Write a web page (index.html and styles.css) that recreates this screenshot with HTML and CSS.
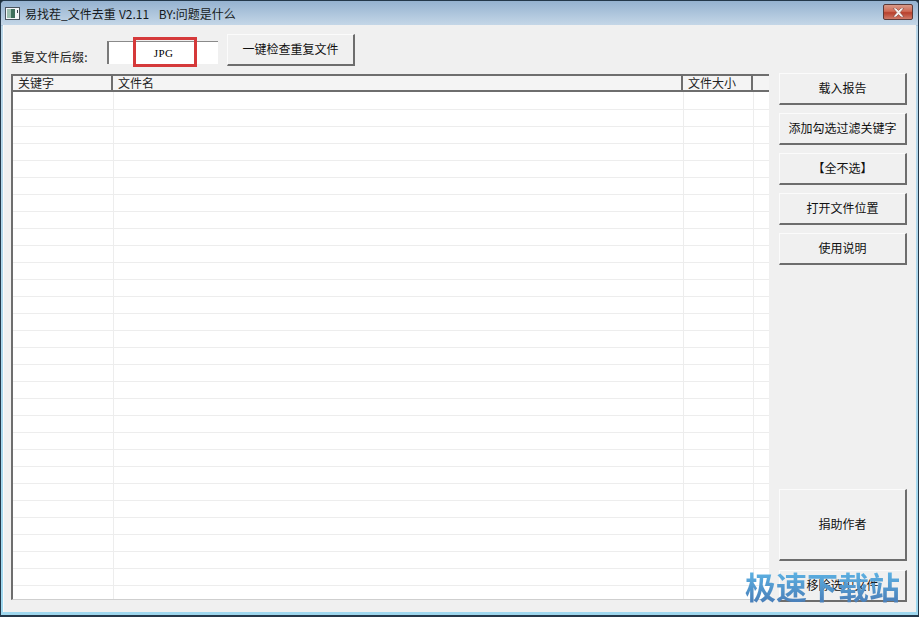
FILE: index.html
```html
<!DOCTYPE html>
<html lang="zh-CN">
<head>
<meta charset="utf-8">
<title>易找茬_文件去重</title>
<link rel="stylesheet" href="styles.css">
</head>
<body>
<div class="window">
  <header class="titlebar">
    <svg class="app-icon" width="15" height="13" viewBox="0 0 15 13">
      <rect x="0.500" y="0.500" width="14" height="12" fill="#f4f6f8" stroke="#4a545e"/>
      <rect x="2" y="2" width="8" height="9" fill="#3f6f5c"/>
      <rect x="2" y="2" width="4" height="9" fill="#9dbfb0"/>
      <rect x="12" y="3" width="1" height="3" fill="#39424c"/>
    </svg>
    <span class="title-text">易找茬_文件去重 V2.11&nbsp;&nbsp; BY:问题是什么</span>
    <button class="close" aria-label="关闭">
      <svg width="13" height="9" viewBox="0 0 13 9"><path d="M1 0h3l2.500 2.500L9 0h3L8.200 4.500 12 9H9L6.500 6.500 4 9H1l3.800-4.500z" fill="#f4f0ee" stroke="#6f2a20" stroke-width=".5"/></svg>
    </button>
  </header>
  <div class="client">
    <div class="main">
      <div class="toolbar">
        <label class="suffix-label">重复文件后缀:</label>
        <div class="suffix-input">JPG</div>
        <button class="btn scan">一键检查重复文件</button>
      </div>
      <div class="list">
        <div class="list-head">
          <div class="col col-key">关键字</div>
          <div class="col col-name">文件名</div>
          <div class="col col-size">文件大小</div>
          <div class="col col-rest"></div>
        </div>
        <div class="list-body"></div>
      </div>
    </div>
    <aside class="side">
      <button class="btn side-btn">载入报告</button>
      <button class="btn side-btn">添加勾选过滤关键字</button>
      <button class="btn side-btn">【全不选】</button>
      <button class="btn side-btn">打开文件位置</button>
      <button class="btn side-btn">使用说明</button>
      <button class="btn side-btn donate">捐助作者</button>
      <button class="btn side-btn move">移除选中文件</button>
    </aside>
  </div>
  <div class="highlight"></div>
  <div class="watermark">极速下载站</div>
</div>
</body>
</html>
```
FILE: styles.css
```css
* { box-sizing: border-box; }
html, body { margin: 0; padding: 0; }
body {
  width: 919px;
  height: 617px;
  overflow: hidden;
  background: #20303c;
  font-family: "Noto Sans CJK SC", "Liberation Sans", sans-serif;
  font-size: 12px;
  color: #111;
}
.window {
  position: relative;
  width: 919px;
  height: 617px;
  display: flex;
  flex-direction: column;
  border: 1px solid #24384a;
  border-radius: 5px 5px 0 0;
  border-bottom-width: 2px;
  background: linear-gradient(#a9c2da 0, #a9c2da 25px, #b9d6e8 25px, #9fd8ef 100%);
}
.titlebar {
  height: 24px;
  flex: none;
  display: flex;
  align-items: center;
  padding: 1px 5px 0 4px;
  background: linear-gradient(#95b2d0, #c4d6e7);
  border-radius: 4px 4px 0 0;
}
.app-icon { flex: none; margin-right: 5px; }
.title-text {
  flex: 1;
  font-size: 12px;
  word-spacing: 0.5px;
  color: #151a20;
}
.close {
  width: 30px;
  height: 16px;
  margin: -3px 0 0 0;
  padding: 0;
  display: flex;
  align-items: center;
  justify-content: center;
  border: 1px solid #5c3a38;
  border-radius: 2px;
  background: linear-gradient(#d99a88 0, #cf6a55 45%, #b8402c 55%, #cf7a68 100%);
}
.client {
  flex: 1;
  margin: 0 2px 3px 2px;
  padding: 0 4px 0 7px;
  display: flex;
  gap: 8px;
  background: #f0f0f0;
  border-left: 1px solid #fafafa;
  overflow: hidden;
}
.main { width: 760px; flex: none; display: flex; flex-direction: column; }
.toolbar {
  height: 49px;
  flex: none;
  display: flex;
  align-items: flex-start;
}
.suffix-label { width: 96px; margin-top: 24px; font-size: 12px; line-height: 16px; letter-spacing: 0.2px; color: #222; }
.suffix-input {
  width: 111px;
  height: 23px;
  margin-top: 16px;
  background: #fff;
  border-top: 1px solid #8a8a8a;
  border-left: 2px solid #7a7a7a;
  font: 11px/23px "Liberation Serif", serif;
  letter-spacing: 0.4px;
  text-align: center;
  color: #000;
}
.btn {
  padding: 0 0 2px;
  background: #f0f0f0;
  border-style: solid;
  border-width: 1px 2px 2px 1px;
  border-color: #fbfbfb #6d6d6d #6d6d6d #fbfbfb;
  font-family: "Noto Sans CJK SC", "Liberation Sans", sans-serif;
  font-size: 12px;
  color: #111;
}
.scan { width: 128px; height: 32px; margin: 9px 0 0 9px; }
.list {
  width: 758px;
  height: 526px;
  display: flex;
  flex-direction: column;
  border-left: 2px solid #6e6e6e;
  border-bottom: 1px solid #cfcfcf;
  background: #fff;
}
.list-head {
  height: 18px;
  flex: none;
  display: flex;
  border-top: 2px solid #6e6e6e;
  border-bottom: 2px solid #6e6e6e;
  background: #f4f4f4;
}
.col {
  height: 14px;
  line-height: 14px;
  padding-left: 5px;
  border-right: 2px solid #6e6e6e;
  color: #222;
  font-size: 12px;
  white-space: nowrap;
}
.col-key { width: 100px; padding-left: 4px; text-indent: 1px; }
.col-name { width: 570px; }
.col-size { width: 70px; }
.col-rest { flex: 1; border-right: 0; }
.list-body {
  flex: 1;
  background-color: #fff;
  background-image:
    linear-gradient(90deg, transparent 99px, #ededed 99px, #ededed 100px, transparent 100px, transparent 669px, #ededed 669px, #ededed 670px, transparent 670px, transparent 739px, #ededed 739px, #ededed 740px, transparent 740px),
    repeating-linear-gradient(180deg, transparent 0, transparent 16px, #ededed 16px, #ededed 17px);
  background-position: 1px 0, 0 1px;
}
.side { flex: 1; display: flex; flex-direction: column; gap: 8px; padding-top: 48px; }
.side-btn { width: 128px; height: 32px; flex: none; }
.donate { height: 72px; margin-top: 216px; }
.move { height: 32px; margin-top: 1px; }
.highlight {
  position: absolute;
  left: 132px;
  top: 36px;
  width: 64px;
  height: 30px;
  border: 3px solid #d5393a;
}
.watermark {
  position: absolute;
  left: 744px;
  top: 563px;
  font-size: 31px;
  font-weight: 600;
  line-height: 44px;
  white-space: nowrap;
  color: transparent;
  background: linear-gradient(180deg, #5cb0e2 20%, #4a80ba 85%);
  -webkit-background-clip: text;
  background-clip: text;
}
```
